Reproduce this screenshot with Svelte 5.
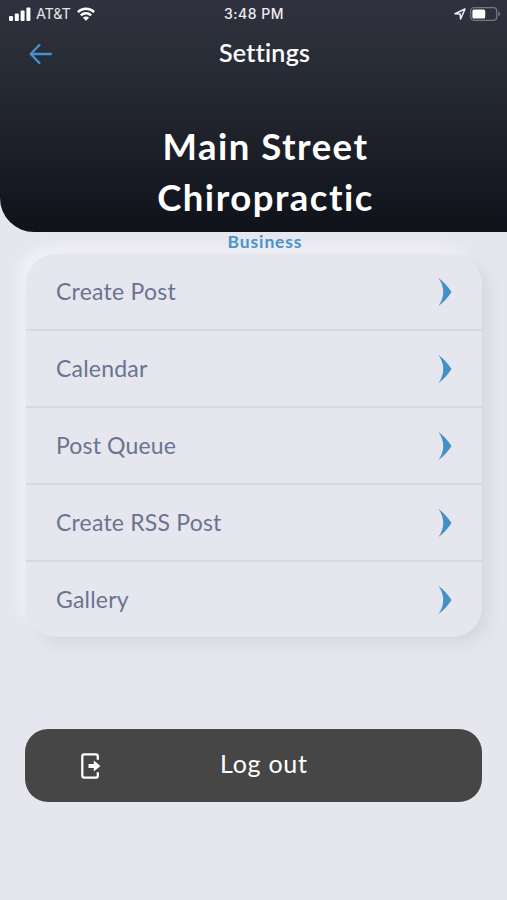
<script>
  const items = [
    { label: 'Create Post', spacing: 0.25 },
    { label: 'Calendar', spacing: 0.2 },
    { label: 'Post Queue', spacing: 0.15 },
    { label: 'Create RSS Post', spacing: 0.2 },
    { label: 'Gallery', spacing: 0.2 }
  ];
</script>

<main class="screen">
  <header class="header">
    <div class="status">
      <div class="carrier">
        <svg width="22" height="14" viewBox="0 0 22 14" fill="#fff">
          <rect x="0" y="9" width="4" height="5" rx="1" />
          <rect x="5.8" y="6.5" width="4" height="7.5" rx="1" />
          <rect x="11.6" y="3.5" width="4" height="10.5" rx="1" />
          <rect x="17.4" y="0.5" width="4" height="13.5" rx="1" />
        </svg>
        <span class="network">AT&amp;T</span>
        <svg class="wifi" width="18" height="14" viewBox="0 0 18 14" fill="none" stroke="#fff" stroke-width="2.5">
          <path d="M0.9 5.1 A11.6 11.6 0 0 1 17.1 5.1" />
          <path d="M3.9 8.3 A7.2 7.2 0 0 1 14.1 8.3" />
          <path d="M9 13.8 L5.9 10.8 A4.4 4.4 0 0 1 12.1 10.8 Z" fill="#fff" stroke="none" />
        </svg>
      </div>
      <span class="time">3:48 PM</span>
      <div class="power">
        <svg width="12" height="12" viewBox="0 0 12 12" fill="none" stroke="#f1f1f3" stroke-width="1.5" stroke-linejoin="round">
          <path d="M1 5.7 L11 1 L6.6 11 L6.2 6 Z" />
        </svg>
        <svg width="31" height="14" viewBox="0 0 31 14">
          <rect x="0.7" y="0.7" width="26" height="12.6" rx="3.2" fill="none" stroke="#74777f" stroke-width="1.3" />
          <rect x="2.4" y="2.4" width="12.8" height="9.2" rx="1.5" fill="#fff" />
          <path d="M28.3 4.6 Q30.3 5.6 30.3 7 Q30.3 8.4 28.3 9.4 Z" fill="#74777f" />
        </svg>
      </div>
    </div>

    <nav class="nav">
      <button class="back" aria-label="Back">
        <svg width="24" height="22" viewBox="0 0 24 22" fill="none" stroke="#4391cd" stroke-width="2.3" stroke-linecap="round" stroke-linejoin="round">
          <path d="M22 11 H2 M10.4 2 L1.7 11 L10.4 20" />
        </svg>
      </button>
      <span class="page-name">Settings</span>
    </nav>

    <h1 class="title"><span>Main Street</span><span class="second">Chiropractic</span></h1>
  </header>

  <p class="section">Business</p>

  <ul class="menu">
    {#each items as item}
      <li class="row">
        <span class="label" style="letter-spacing: {item.spacing}px">{item.label}</span>
        <svg width="14" height="28" viewBox="0 0 14 28" fill="#438fc8">
          <path d="M0.5 0 Q8 5.5 13.5 14 Q8 22.5 0.5 28 Q10 14 0.5 0 Z" />
        </svg>
      </li>
    {/each}
  </ul>

  <button class="logout">
    <svg width="20" height="26" viewBox="0 0 20 26" fill="none" stroke="#fff" stroke-width="2.3" stroke-linejoin="round">
      <path d="M16.8 6.8 V3.2 Q16.8 1.3 14.9 1.3 H3.2 Q1.3 1.3 1.3 3.2 V22.8 Q1.3 24.7 3.2 24.7 H14.9 Q16.8 24.7 16.8 22.8 V19.2" />
      <path d="M7.5 11 H12.8 V7.4 L19.4 13 L12.8 18.6 V15 H7.5 Z" fill="#fff" stroke="none" />
    </svg>
    <span class="logout-label">Log out</span>
  </button>
</main>

<style>
  :global(body) { background: #e5e6ee; }
  .screen { height: 900px; overflow: hidden; box-sizing: border-box; font-family: Lato, 'Open Sans', sans-serif; background: #e5e6ee; display: flex; flex-direction: column; }

  .header { height: 232px; flex: none; background: linear-gradient(#30333f 0%, #262a34 35%, #10121a 100%); border-bottom-left-radius: 34px; color: #fff; }
  .status { height: 27px; display: grid; grid-template-columns: 1fr auto 1fr; align-items: center; padding: 0 6px 0 9px; font-family: Inter, sans-serif; }
  .carrier { display: flex; align-items: center; }
  .network { font-size: 14.5px; color: #e4e5e8; margin-left: 5px; letter-spacing: -0.2px; }
  .wifi { margin-left: 6px; }
  .time { font-size: 14px; font-weight: 500; color: #eeeef1; letter-spacing: 0.5px; margin-right: 2px; }
  .power { display: flex; justify-content: flex-end; align-items: center; gap: 4px; }

  .nav { height: 52px; display: grid; grid-template-columns: 219px 1fr; align-items: center; }
  .back { background: none; border: 0; padding: 1px 0 0 29px; display: flex; }
  .page-name { font-size: 25px; letter-spacing: 0.3px; font-weight: 500; -webkit-text-stroke: 0.2px #fff; padding-bottom: 2px; }
  .title { margin: 42px 0 0; padding-left: 24px; display: flex; flex-direction: column; align-items: center; font-size: 36.5px; line-height: 51px; font-weight: 700; letter-spacing: 1.5px; }

  .section { margin: 0; padding-left: 23px; height: 22px; line-height: 20px; text-align: center; font-size: 17.5px; font-weight: 700; letter-spacing: 0.85px; color: #4a93ca; position: relative; z-index: 1; }

  .menu { list-style: none; margin: 0 25px 0 26px; padding: 0; height: 383px; flex: none; border-radius: 30px; background: #e5e6ee; box-shadow: 7px 7px 14px #d5d8de, -7px -7px 14px #f2f3f5; }
  .row { height: 77px; box-sizing: border-box; border-bottom: 2px solid #d8dae0; display: flex; align-items: center; justify-content: space-between; padding: 0 30px; font-size: 23px; color: #6c7390; }
  .row:last-child { border-bottom-color: transparent; }
  .label { padding-bottom: 2px; }

  .logout { margin: 92px 25px 0 25px; height: 73px; flex: none; border: 0; border-radius: 23px; background: #464646; box-shadow: 0 0 2px #f4f4f6; color: #fff; font-family: inherit; font-size: 25px; display: grid; grid-template-columns: 139px 1fr; align-items: center; padding: 0 0 0 56px; text-align: left; letter-spacing: 0.75px; }
  .logout-label { padding-bottom: 5px; }
</style>
